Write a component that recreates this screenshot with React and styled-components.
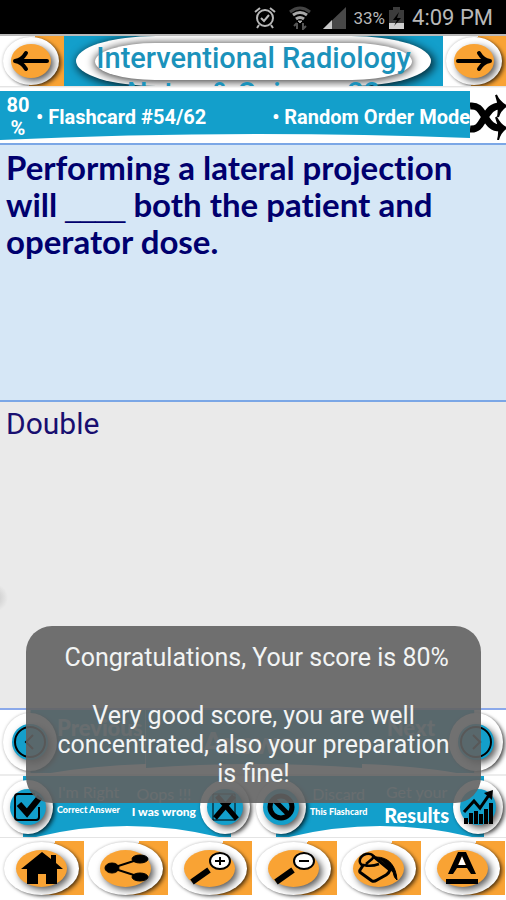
import React, { useState } from 'react';
import styled, { createGlobalStyle } from 'styled-components';

const BLUE = '#139fcb';
const ORANGE = '#f9a334';

const GlobalStyles = createGlobalStyle`
  * {
    box-sizing: border-box;
  }
  body {
    margin: 0;
    background-color: #fff;
    font-family: Roboto, sans-serif;
  }
  button {
    border: none;
    padding: 0;
    margin: 0;
    background: none;
    font: inherit;
    color: inherit;
    cursor: pointer;
  }
`;

const Screen = styled.div`
  position: relative;
  display: flex;
  flex-direction: column;
  min-height: 100vh;
  overflow: hidden;
`;

const StatusBar = styled.div`
  display: flex;
  align-items: center;
  justify-content: flex-end;
  height: 34px;
  padding: 1px 13px 0 0;
  background-color: #000;
  color: #b8b8b8;
`;

const StatusIcon = styled.svg`
  width: ${(p) => p.$w}px;
  height: 24px;
  margin-right: ${(p) => p.$gap}px;
`;

const Battery = styled.span`
  font-size: 17px;
  margin-right: 4px;
`;

const Clock = styled.span`
  font-size: 22px;
`;

const Header = styled.header`
  display: grid;
  grid-template-columns: 64px 1fr 63px;
  height: 53px;
  border-top: 2px solid #b9b9b9;
  border-bottom: 1px solid #e4e4e4;
  overflow: hidden;
`;

const HeaderButton = styled.button`
  display: flex;
  align-items: center;
  padding: 0 3px;
  background: linear-gradient(97deg, #fff 50%, ${ORANGE} 50%);
`;

const Ring = styled.span`
  display: flex;
  flex: none;
  align-items: center;
  justify-content: center;
  width: ${(p) => p.$w}px;
  height: ${(p) => p.$h}px;
  border-radius: 50%;
  background-color: #fff;
  box-shadow: 3px 2px 4px -1px rgba(0, 0, 0, 0.65), 0 0 3px rgba(0, 0, 0, 0.25);
`;

const Core = styled.span`
  display: flex;
  align-items: center;
  justify-content: center;
  width: ${(p) => p.$w}px;
  height: ${(p) => p.$h}px;
  border-radius: 50%;
  background-color: ${(p) => p.$color || ORANGE};
  box-shadow: 3px 3px 7px rgba(0, 0, 0, 0.65);

  svg {
    flex: none;
    overflow: visible;
  }
`;

const TitleBox = styled.div`
  display: grid;
  grid-template-rows: 50px;
  background-color: ${BLUE};
  overflow: hidden;

  > * {
    grid-area: 1 / 1;
  }
`;

const TitleOval = styled.div`
  margin: 0 12px;
  padding: 7px 19px 6px;
  border-radius: 80px / 50%;
  background-color: #fff;
  box-shadow: 2px 2px 8px 2px rgba(0, 0, 0, 0.7);
`;

const TitleInner = styled.div`
  height: 37px;
  border-radius: 60px / 50%;
  background-color: #fff;
  box-shadow: 0 1px 8px 1px rgba(0, 0, 0, 0.75);
`;

const Title = styled.h1`
  margin: 0;
  padding: 5px 20px 0;
  color: #1b92bb;
  font-size: 29px;
  font-weight: 500;
  line-height: 35px;
  text-align: center;
`;

const InfoRow = styled.div`
  display: grid;
  grid-template-columns: 1fr 36px;
  height: 56px;
  padding-top: 3px;
  border-top: 1px solid #f4f4f4;
  background-color: #fff;
`;

const InfoBar = styled.div`
  display: grid;

  > * {
    grid-area: 1 / 1;
  }
`;

const Shape = styled.svg`
  display: block;
  width: 100%;
  height: 100%;
  min-height: 0;
`;

const InfoText = styled.div`
  display: flex;
  align-items: center;
  height: 52px;
  color: #fff;
  font-size: 20px;
  font-weight: 700;
  white-space: nowrap;
`;

const Score = styled.span`
  width: 36px;
  text-align: center;
  line-height: 23px;
  white-space: normal;
`;

const Mode = styled.span`
  margin-left: auto;
`;

const ShuffleButton = styled.button`
  display: flex;
  align-items: center;
  justify-content: center;
`;

const Question = styled.section`
  flex: 255 1 0;
  border-top: 2px solid #7ba7e6;
  background-color: #d6e7f6;
  color: #00006e;
  font-family: Lato, sans-serif;
  font-size: 33px;
  font-weight: 700;
  font-variant-ligatures: none;
  line-height: 37px;
`;

const Blank = styled.span`
  font-family: 'Liberation Sans', sans-serif;
  font-size: 27px;
  font-weight: 400;
  line-height: 1;
`;

const Answer = styled.section`
  flex: 306 1 0;
  border-top: 2px solid #7ba7e6;
  border-bottom: 2px solid #8ba9ea;
  background: radial-gradient(circle at -6px 64%, #c4c4c4, #eaeaea 14px) #eaeaea;
  color: #190f70;
  font-size: 30px;
  line-height: 35px;
`;

const Text = styled.p`
  margin: 0;
  padding: 4px 6px;
`;

const NavRow = styled.nav`
  display: grid;
  grid-template-columns: 143fr 218fr 145fr;
  height: 64px;
`;

const NavButton = styled.button`
  display: grid;
  grid-template-rows: 64px;
  grid-template-columns: 100%;
  color: rgba(255, 255, 255, 0.6);
  font-family: Lato, sans-serif;
  font-size: ${(p) => p.$size || 22}px;
  font-weight: 900;

  > * {
    grid-area: 1 / 1;
  }
`;

const NavContent = styled.span`
  display: flex;
  align-items: center;
  justify-content: ${(p) => p.$justify || 'flex-start'};
  gap: 0 ${(p) => p.$gap || 0}px;
  padding: 0 3px;
`;

const NavLabel = styled.span`
  padding-bottom: 30px;
`;

const ActionRow = styled.div`
  display: grid;
  grid-template-columns: 1fr 1fr;
  height: 64px;
  border-top: 2px solid #ececec;
  border-bottom: 1px solid #e4e4e4;
`;

const ActionPanel = styled.div`
  display: grid;
  grid-template-rows: 61px;

  > * {
    grid-area: 1 / 1;
  }
`;

const ActionPair = styled.div`
  display: flex;
  align-items: center;
  justify-content: space-between;
  padding: 0 3px;
`;

const ActionButton = styled.button`
  display: flex;
  align-items: center;
  gap: 4px;
  color: #fff;
  font-family: Lato, sans-serif;
  text-align: center;
  white-space: nowrap;
`;

const ActionText = styled.span`
  display: flex;
  flex-direction: column;
  padding-bottom: ${(p) => p.$lift || 10}px;
`;

const Lead = styled.span`
  color: rgba(255, 255, 255, 0.6);
  font-size: 16px;
  line-height: 20px;
`;

const Detail = styled.span`
  font-size: ${(p) => p.$size}px;
  font-weight: 900;
  line-height: ${(p) => (p.$size > 16 ? 26 : 16)}px;
`;

const Toolbar = styled.div`
  display: grid;
  grid-template-columns: repeat(6, 1fr);
  height: 62px;
  padding: 3px 1px 5px 0;
`;

const ToolButton = styled.button`
  display: flex;
  align-items: center;
  padding-left: 4px;
  background: linear-gradient(105deg, #fff 56%, ${ORANGE} 56%);
`;

const Toast = styled.div`
  position: absolute;
  left: 26px;
  right: 25px;
  bottom: 97px;
  padding: 17px 28px 15px;
  border-radius: 26px;
  background-color: rgba(98, 98, 98, 0.9);
  color: #f2f4f4;
  font-size: 25px;
  line-height: 29px;
  text-align: center;
  white-space: pre-line;
`;

const ArrowIcon = ({ right }) => (
  <svg width="36" height="20" viewBox="0 0 36 20" fill="none" stroke="#000" strokeLinecap="round">
    <g transform={right ? 'translate(36 0) scale(-1 1)' : undefined}>
      <path d="M2 10H34" strokeWidth="4" />
      <path d="M13 2Q9 9 2 10Q9 11 13 18" strokeWidth="4" />
    </g>
  </svg>
);

const ShuffleIcon = () => (
  <svg width="36" height="46" viewBox="0 0 36 46" fill="none" stroke="#000">
    <path d="M0 12C9 11 11 17 15 23S22 34 30 34" strokeWidth="7" />
    <path d="M0 35C9 36 11 29 15 23S22 12 30 12" strokeWidth="7" />
    <path d="M26 1Q29 8 36 12Q30 16 28 23Q30 12 26 1ZM26 23Q30 31 36 34Q30 38 28 46Q31 35 26 23Z" fill="#000" strokeWidth="2" />
  </svg>
);

const HomeIcon = () => (
  <svg width="42" height="32" viewBox="0 0 42 32">
    <path d="M21 0L30 7V3H35V11L42 17H36V32H25V22H17V32H6V17H0Z" fill="#000" />
  </svg>
);

const ShareIcon = () => (
  <svg width="44" height="28" viewBox="0 0 44 28" stroke="#000">
    <path d="M36 5L8 14L36 23" fill="none" strokeWidth="2" />
    <ellipse cx="8" cy="14" rx="7" ry="5" />
    <ellipse cx="36" cy="5" rx="8" ry="4" />
    <ellipse cx="36" cy="23" rx="8" ry="4" />
  </svg>
);

const ZoomIcon = ({ plus }) => (
  <svg width="40" height="32" viewBox="0 0 40 32" stroke="#000">
    <path d="M2 30L19 18" strokeWidth="6" />
    <ellipse cx="30" cy="9" rx="10" ry="8" fill="#fff" strokeWidth="2" />
    <path d={plus ? 'M25 9H35M30 5V13' : 'M25 9H35'} strokeWidth="2" />
  </svg>
);

const BucketIcon = () => (
  <svg width="42" height="30" viewBox="0 0 42 30" fill="none" stroke="#000" strokeWidth="3">
    <path d="M7 11L3 17Q2 19 4 20L15 28Q17 29 20 27L29 22Q32 20 33 17L16 3" strokeLinejoin="round" />
    <path d="M6 13C0 9 3 3 9 1C15 0 18 3 15 6L9 11M7 12Q14 14 22 11" strokeWidth="2.5" />
    <path d="M19 4C32 4 39 13 40 27Q37 25 36 19L30 14Q26 8 19 4Z" fill="#000" strokeWidth="1" />
  </svg>
);

const FontIcon = () => (
  <svg width="34" height="32" viewBox="0 0 34 32">
    <path d="M17 4L21 14H13Z" fill="#fff" />
    <path d="M3 22L13 0H21L31 22H26L22 16H12L8 22ZM13 13H21L17 4Z" fill="#000" fillRule="evenodd" />
    <path d="M1 27H33V32H1Z" fill="#000" />
  </svg>
);

const ChevronCircle = ({ right }) => (
  <svg width="38" height="38" viewBox="0 0 38 38" fill="none" stroke="#000">
    <circle cx="19" cy="19" r="15" strokeWidth="2" />
    <path d={right ? 'M16 12L23 19L16 26' : 'M22 12L15 19L22 26'} strokeWidth="2" />
  </svg>
);

const CheckIcon = () => (
  <svg width="30" height="32" viewBox="0 0 30 32" fill="none" stroke="#000">
    <path d="M22 3H5Q2 3 2 6V26Q2 29 5 29H23Q26 29 26 26V16" strokeWidth="2" />
    <path d="M6 13L14 22L27 6" strokeWidth="6" />
  </svg>
);

const CrossIcon = () => (
  <svg width="28" height="32" viewBox="0 0 28 32" fill="none" stroke="#000">
    <path d="M2 3H24V29H2Z" strokeWidth="1" />
    <path d="M4 27L23 5M6 5Q14 14 26 28" strokeWidth="5" />
  </svg>
);

const BanIcon = () => (
  <svg width="28" height="28" viewBox="0 0 28 28" fill="none" stroke="#000" strokeWidth="5">
    <circle cx="14" cy="14" r="11" />
    <path d="M6 6L22 22" />
  </svg>
);

const ChartIcon = () => (
  <svg width="30" height="36" viewBox="0 0 30 36" fill="none" stroke="#000">
    <path d="M3 35V29M8 35V24M13 35V22M18 35V25M23 35V20M28 35V14" strokeWidth="4" />
    <path d="M1 23L11 12L17 19L26 6" strokeWidth="3" />
    <path d="M21 4L30 1L29 11Z" fill="#000" strokeWidth="0" />
  </svg>
);

const Badge = ({ size = 50, core = 36, children }) => (
  <Ring $w={size} $h={size + 4}>
    <Core $w={core} $h={core} $color={BLUE}>{children}</Core>
  </Ring>
);

const PanelShape = () => (
  <Shape viewBox="0 0 253 61" preserveAspectRatio="none">
    <path d="M23 0H231V61H219Q127 39 36 61H23Z" fill={BLUE} />
  </Shape>
);

const tools = [
  { name: 'Home', icon: <HomeIcon /> },
  { name: 'Share', icon: <ShareIcon /> },
  { name: 'Zoom in', icon: <ZoomIcon plus /> },
  { name: 'Zoom out', icon: <ZoomIcon /> },
  { name: 'Background color', icon: <BucketIcon /> },
  { name: 'Text color', icon: <FontIcon /> },
];

const App = () => {
  const [toast, setToast] = useState(true);

  return (
    <Screen>
      <GlobalStyles />
      <StatusBar>
        <StatusIcon $w={22} $gap={13} viewBox="0 0 22 24" fill="none" stroke="#b8b8b8" strokeWidth="2">
          <circle cx="11" cy="12" r="8" />
          <path d="M7 12L10 15L15 9M1 6L6 2M16 2L21 6M5 19L3 22M17 19L19 22" />
        </StatusIcon>
        <StatusIcon $w={22} $gap={12} viewBox="0 0 22 24" fill="none" stroke="#a8a8a8" strokeWidth="3">
          <path d="M1 6Q11 -2 21 6" stroke="#444" />
          <path d="M4 9Q11 4 18 9M7 13Q11 10 15 13" />
          <path d="M9 15L11 17L13 15Z" fill="#a8a8a8" strokeWidth="1" />
          <path d="M8 23V17M5 20L8 17M14 17V23L17 20" stroke="#555" strokeWidth="2" />
        </StatusIcon>
        <StatusIcon $w={23} $gap={7} viewBox="0 0 23 24">
          <path d="M0 23L23 1V23Z" fill="#484848" />
          <path d="M0 23L9 14V23Z" fill="#c8c8c8" />
        </StatusIcon>
        <Battery>33%</Battery>
        <StatusIcon $w={15} $gap={8} viewBox="0 0 15 24">
          <path d="M0 4H4V1H11V4H15V23H0Z" fill="#3c3c3c" />
          <path d="M0 17H15V23H0Z" fill="#d0d0d0" />
          <path d="M10 6L4 14H8L5 20L12 12H8Z" fill="#000" />
        </StatusIcon>
        <Clock>4:09 PM</Clock>
      </StatusBar>

      <Header>
        <HeaderButton aria-label="Back">
          <Ring $w={56} $h={48}>
            <Core $w={40} $h={34}><ArrowIcon /></Core>
          </Ring>
        </HeaderButton>
        <TitleBox>
          <TitleOval>
            <TitleInner />
          </TitleOval>
          <Title>Interventional Radiology Notes &amp; Quizzes 22</Title>
        </TitleBox>
        <HeaderButton aria-label="Forward">
          <Ring $w={56} $h={48}>
            <Core $w={40} $h={34}><ArrowIcon right /></Core>
          </Ring>
        </HeaderButton>
      </Header>

      <InfoRow>
        <InfoBar>
          <Shape viewBox="0 0 470 52" preserveAspectRatio="none">
            <path d="M0 0H470V47Q235 38 0 49Z" fill={BLUE} />
          </Shape>
          <InfoText>
            <Score>80 %</Score>
            <span>• Flashcard #54/62</span>
            <Mode>• Random Order Mode</Mode>
          </InfoText>
        </InfoBar>
        <ShuffleButton aria-label="Shuffle"><ShuffleIcon /></ShuffleButton>
      </InfoRow>

      <Question>
        <Text>
          Performing a lateral projection will <Blank>____</Blank> both the patient and operator dose.
        </Text>
      </Question>
      <Answer>
        <Text>Double</Text>
      </Answer>

      <NavRow>
        <NavButton>
          <Shape viewBox="0 0 143 64" preserveAspectRatio="none">
            <path d="M30 0H143V54Q90 56 50 63H30Z" fill={BLUE} />
          </Shape>
          <NavContent>
            <Badge size={54}><ChevronCircle /></Badge>
            <NavLabel>Previous</NavLabel>
          </NavContent>
        </NavButton>
        <NavButton $size={30}>
          <Shape viewBox="0 0 218 64" preserveAspectRatio="none">
            <path d="M0 0H218V58Q109 50 0 58Z" fill={BLUE} />
          </Shape>
          <NavContent $justify="center">Answer</NavContent>
        </NavButton>
        <NavButton>
          <Shape viewBox="0 0 145 64" preserveAspectRatio="none">
            <path d="M0 0H113V63H95Q55 56 0 54Z" fill={BLUE} />
          </Shape>
          <NavContent $justify="flex-end" $gap={14}>
            <NavLabel>Next</NavLabel>
            <Badge size={54}><ChevronCircle right /></Badge>
          </NavContent>
        </NavButton>
      </NavRow>

      <ActionRow>
        <ActionPanel>
          <PanelShape />
          <ActionPair>
            <ActionButton>
              <Badge><CheckIcon /></Badge>
              <ActionText $lift={14}>
                <Lead>I'm Right</Lead>
                <Detail $size={9}>Correct Answer</Detail>
              </ActionText>
            </ActionButton>
            <ActionButton>
              <ActionText>
                <Lead>Oops !!!</Lead>
                <Detail $size={12}>I was wrong</Detail>
              </ActionText>
              <Badge><CrossIcon /></Badge>
            </ActionButton>
          </ActionPair>
        </ActionPanel>
        <ActionPanel>
          <PanelShape />
          <ActionPair>
            <ActionButton>
              <Badge><BanIcon /></Badge>
              <ActionText>
                <Lead>Discard</Lead>
                <Detail $size={9}>This Flashcard</Detail>
              </ActionText>
            </ActionButton>
            <ActionButton>
              <ActionText $lift={4}>
                <Lead>Get your</Lead>
                <Detail $size={20}>Results</Detail>
              </ActionText>
              <Badge><ChartIcon /></Badge>
            </ActionButton>
          </ActionPair>
        </ActionPanel>
      </ActionRow>

      <Toolbar>
        {tools.map((tool) => (
          <ToolButton key={tool.name} aria-label={tool.name}>
            <Ring $w={75} $h={53}>
              <Core $w={51} $h={37}>{tool.icon}</Core>
            </Ring>
          </ToolButton>
        ))}
      </Toolbar>

      {toast && (
        <Toast role="status" onClick={() => setToast(false)}>
          {'\u00a0Congratulations, Your score is 80%\n\nVery good score, you are well concentrated, also your preparation is fine!'}
        </Toast>
      )}
    </Screen>
  );
};

export default App;
